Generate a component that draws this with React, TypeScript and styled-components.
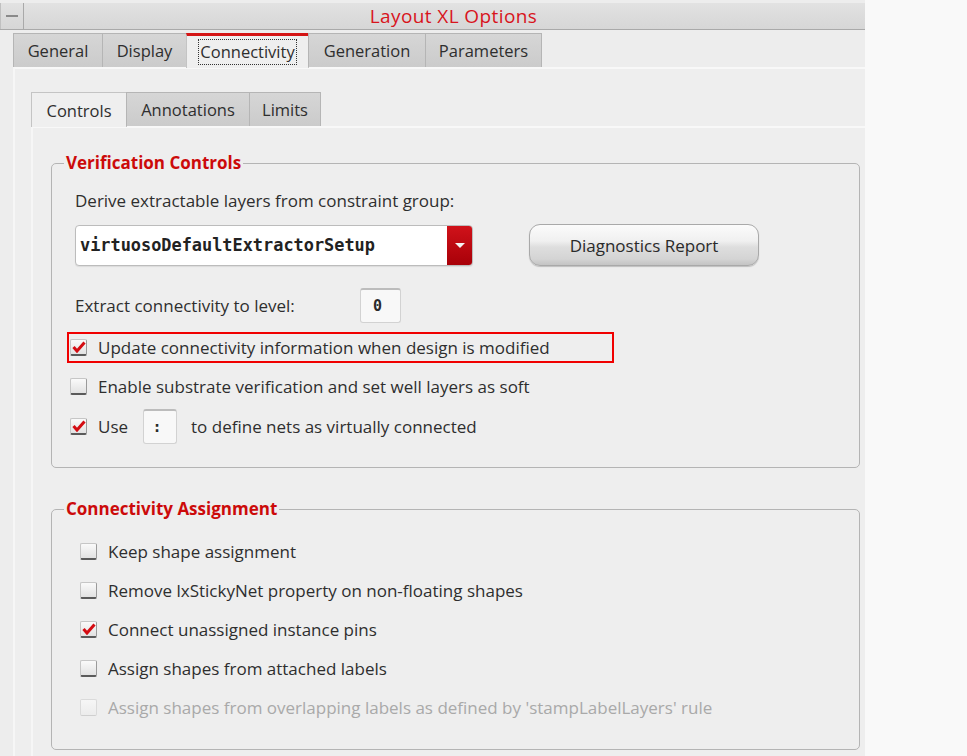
import { ReactNode } from 'react'
import styled, { createGlobalStyle, css } from 'styled-components'

const GlobalStyle = createGlobalStyle`
  html, body {
    margin: 0;
    padding: 0;
    background: #f9f9f9;
  }
  body {
    font-family: 'Open Sans', 'DejaVu Sans', sans-serif;
    color: #2e2e2e;
  }
`

const Window = styled.div`
  width: 865px;
  height: 756px;
  background: #ededed;
  display: flex;
  flex-direction: column;
  overflow: hidden;
`

const TitleBar = styled.div`
  margin-top: 3px;
  height: 26px;
  display: flex;
  background: linear-gradient(#e2e2e2, #d6d6d6);
  border-bottom: 1px solid #a9a9a9;
`

const MinButton = styled.div`
  width: 22px;
  border-right: 1px solid #a9a9a9;
  border-left: 1px solid #c0c0c0;
  display: flex;
  align-items: center;
  justify-content: center;

  &::after {
    content: '';
    width: 12px;
    height: 2px;
    background: #8a8a8a;
  }
`

const Title = styled.div`
  flex: 1;
  text-align: center;
  padding-left: 18px;
  font-size: 19px;
  letter-spacing: 0.4px;
  line-height: 26px;
  color: #d8141c;
`

const TabRow = styled.div<{ $inset: number; $top: number }>`
  display: flex;
  align-items: flex-end;
  padding-left: ${({ $inset }) => $inset}px;
  margin-top: ${({ $top }) => $top}px;
  position: relative;
  z-index: 1;
`

const Tab = styled.div<{ $active?: boolean; $width: number; $height: number }>`
  width: ${({ $width }) => $width}px;
  height: ${({ $height }) => $height}px;
  box-sizing: border-box;
  display: flex;
  align-items: center;
  justify-content: center;
  font-size: 16.5px;
  color: #2e2e2e;
  background: linear-gradient(#d6d6d6, #cbcbcb);
  border: 1px solid #b5b5b5;
  border-bottom: none;
  margin-right: -1px;

  ${({ $active }) =>
    $active &&
    css`
      background: #efefef;
      border-color: #c4c4c4;
      margin-bottom: -1px;
      height: ${({ $height }: { $height: number }) => $height + 1}px;
    `}
`

const MainTab = styled(Tab)<{ $active?: boolean }>`
  ${({ $active }) =>
    $active &&
    css`
      border-top: 3px solid #d41414;
      span {
        outline: 1px dotted #333;
        outline-offset: 1px;
        line-height: 22px;
      }
    `}
`

const Pane = styled.div<{ $inset: number }>`
  flex: 1;
  margin-left: ${({ $inset }) => $inset}px;
  background: #eeeeee;
  border-top: 2px solid #f8f8f8;
  border-left: 2px solid #f6f6f6;
  display: flex;
  flex-direction: column;
`

const Group = styled.fieldset<{ $top: number }>`
  margin: ${({ $top }) => $top}px 5px 0 18px;
  padding: 0;
  border: 1px solid #b4b4b4;
  border-radius: 5px;
  min-width: 0;
`

const Legend = styled.legend`
  margin-left: 12px;
  padding: 0 2px;
  font-size: 17px;
  font-weight: 700;
  line-height: 22px;
  color: #cc0a0a;
`

const GroupBody = styled.div<{ $pad: string }>`
  padding: ${({ $pad }) => $pad};
  display: flex;
  flex-direction: column;
`

const Label = styled.div<{ $width?: number; $muted?: boolean }>`
  font-size: 17px;
  line-height: 22px;
  white-space: nowrap;
  width: ${({ $width }) => ($width ? `${$width}px` : 'auto')};
  color: ${({ $muted }) => ($muted ? '#a9a9a9' : '#2e2e2e')};
`

const Row = styled.div<{ $top?: number; $indent?: number }>`
  display: flex;
  align-items: center;
  margin-top: ${({ $top }) => $top ?? 0}px;
  margin-left: ${({ $indent }) => $indent ?? 0}px;
`

const Select = styled.div`
  width: 398px;
  height: 41px;
  box-sizing: border-box;
  display: flex;
  background: #ffffff;
  border: 1px solid #bcbcbc;
  border-radius: 4px;
  overflow: hidden;
  box-shadow: 0 1px 1px rgba(0, 0, 0, 0.08);
`

const SelectValue = styled.div`
  flex: 1;
  padding-left: 4px;
  display: flex;
  align-items: center;
  font-family: 'DejaVu Sans Mono', 'Liberation Mono', monospace;
  font-size: 16.9px;
  font-weight: 600;
  color: #222222;
`

const SelectArrow = styled.div`
  width: 25px;
  background: linear-gradient(#d0121a, #a80008);
  display: flex;
  align-items: center;
  justify-content: center;

  &::after {
    content: '';
    border-left: 5px solid transparent;
    border-right: 5px solid transparent;
    border-top: 5px solid #f4f4f4;
  }
`

const PushButton = styled.div`
  width: 230px;
  height: 42px;
  box-sizing: border-box;
  margin-left: 56px;
  display: flex;
  align-items: center;
  justify-content: center;
  border: 1px solid #a9a9a9;
  border-radius: 11px;
  font-size: 17px;
  color: #2a2a2a;
  background: linear-gradient(#fbfbfb 0%, #f0f0f0 40%, #dedede 55%, #d4d4d4 85%, #c4c4c4 100%);
  box-shadow: 0 1px 1px rgba(0, 0, 0, 0.2);
`

const Field = styled.div<{ $width: number; $height: number }>`
  width: ${({ $width }) => $width}px;
  height: ${({ $height }) => $height}px;
  box-sizing: border-box;
  display: flex;
  align-items: center;
  justify-content: center;
  padding-right: 6px;
  background: #f8f8f8;
  border: 1px solid #d2d2d2;
  border-top: 2px solid #bcbcbc;
  border-radius: 3px;
  font-family: 'DejaVu Sans Mono', 'Liberation Mono', monospace;
  font-size: 15px;
  font-weight: 600;
  color: #2a2a2a;
`

const CheckRow = styled.div<{ $height: number; $highlight?: boolean }>`
  display: flex;
  align-items: center;
  gap: 11px;
  height: ${({ $height }) => $height}px;
  box-sizing: border-box;

  ${({ $highlight }) =>
    $highlight &&
    css`
      width: 547px;
      margin-left: -3px;
      padding-left: 1px;
      border: 2px solid #f00000;
    `}
`

const Box = styled.div<{ $disabled?: boolean }>`
  width: 17px;
  height: 17px;
  flex: none;
  box-sizing: border-box;
  border: 1px solid #c6c6c6;
  border-bottom: 2px solid #5a5a5a;
  border-right-color: #9a9a9a;
  border-radius: 2px;
  background: linear-gradient(#fafafa, #e2e2e2);
  display: flex;
  align-items: center;
  justify-content: center;

  ${({ $disabled }) =>
    $disabled &&
    css`
      border-color: #dadada;
      border-bottom: 1px solid #cfcfcf;
      background: linear-gradient(#f6f6f6, #ececec);
    `}
`

const Check = () => (
  <svg width="14" height="12" viewBox="0 0 14 12">
    <path d="M1.5 6 L5 10 L12.5 1.5" fill="none" stroke="#d40c12" strokeWidth="3" strokeLinejoin="miter" />
  </svg>
)

const CheckBox = ({ checked, disabled }: { checked?: boolean; disabled?: boolean }) => (
  <Box $disabled={disabled}>{checked && <Check />}</Box>
)

type CheckItemProps = {
  checked?: boolean
  disabled?: boolean
  highlight?: boolean
  height?: number
  children: ReactNode
}

const CheckItem = ({ checked, disabled, highlight, height = 39, children }: CheckItemProps) => (
  <CheckRow $height={height} $highlight={highlight}>
    <CheckBox checked={checked} disabled={disabled} />
    {children}
  </CheckRow>
)

const InlineField = styled(Field)`
  margin: 0 3px 0 4px;
`

const assignments = [
  { label: 'Keep shape assignment' },
  { label: 'Remove lxStickyNet property on non-floating shapes' },
  { label: 'Connect unassigned instance pins', checked: true },
  { label: 'Assign shapes from attached labels' },
  { label: "Assign shapes from overlapping labels as defined by 'stampLabelLayers' rule", disabled: true },
]

const mainTabs = [
  { label: 'General', width: 90 },
  { label: 'Display', width: 85 },
  { label: 'Connectivity', width: 123, active: true },
  { label: 'Generation', width: 118 },
  { label: 'Parameters', width: 117 },
]

const subTabs = [
  { label: 'Controls', width: 96, active: true },
  { label: 'Annotations', width: 124 },
  { label: 'Limits', width: 72 },
]

export default function App() {
  return (
    <>
      <GlobalStyle />
      <Window>
        <TitleBar>
          <MinButton />
          <Title>Layout XL Options</Title>
        </TitleBar>

        <TabRow $inset={13} $top={3}>
          {mainTabs.map((t) => (
            <MainTab key={t.label} $active={t.active} $width={t.width} $height={34}>
              <span>{t.label}</span>
            </MainTab>
          ))}
        </TabRow>

        <Pane $inset={13}>
          <TabRow $inset={16} $top={23}>
            {subTabs.map((t) => (
              <Tab key={t.label} $active={t.active} $width={t.width} $height={34}>
                {t.label}
              </Tab>
            ))}
          </TabRow>

          <Pane $inset={16}>
            <Group $top={24}>
              <Legend>Verification Controls</Legend>
              <GroupBody $pad="16px 0 22px 18px">
                <Row $indent={5}>
                  <Label>Derive extractable layers from constraint group:</Label>
                </Row>
                <Row $top={12} $indent={5}>
                  <Select>
                    <SelectValue>virtuosoDefaultExtractorSetup</SelectValue>
                    <SelectArrow />
                  </Select>
                  <PushButton>Diagnostics Report</PushButton>
                </Row>
                <Row $top={22} $indent={5}>
                  <Label $width={285}>Extract connectivity to level:</Label>
                  <Field $width={41} $height={35}>0</Field>
                </Row>
                <Row $top={9}>
                  <CheckItem checked highlight height={31}>
                    <Label>Update connectivity information when design is modified</Label>
                  </CheckItem>
                </Row>
                <Row $top={4}>
                  <CheckItem height={39}>
                    <Label>Enable substrate verification and set well layers as soft</Label>
                  </CheckItem>
                </Row>
                <Row $top={2}>
                  <CheckItem checked height={37}>
                    <Label>Use</Label>
                    <InlineField $width={34} $height={35}>:</InlineField>
                    <Label>to define nets as virtually connected</Label>
                  </CheckItem>
                </Row>
              </GroupBody>
            </Group>

            <Group $top={30}>
              <Legend>Connectivity Assignment</Legend>
              <GroupBody $pad="12px 0 22px 28px">
                {assignments.map((a) => (
                  <CheckItem key={a.label} checked={a.checked} disabled={a.disabled}>
                    <Label $muted={a.disabled}>{a.label}</Label>
                  </CheckItem>
                ))}
              </GroupBody>
            </Group>
          </Pane>
        </Pane>
      </Window>
    </>
  )
}
